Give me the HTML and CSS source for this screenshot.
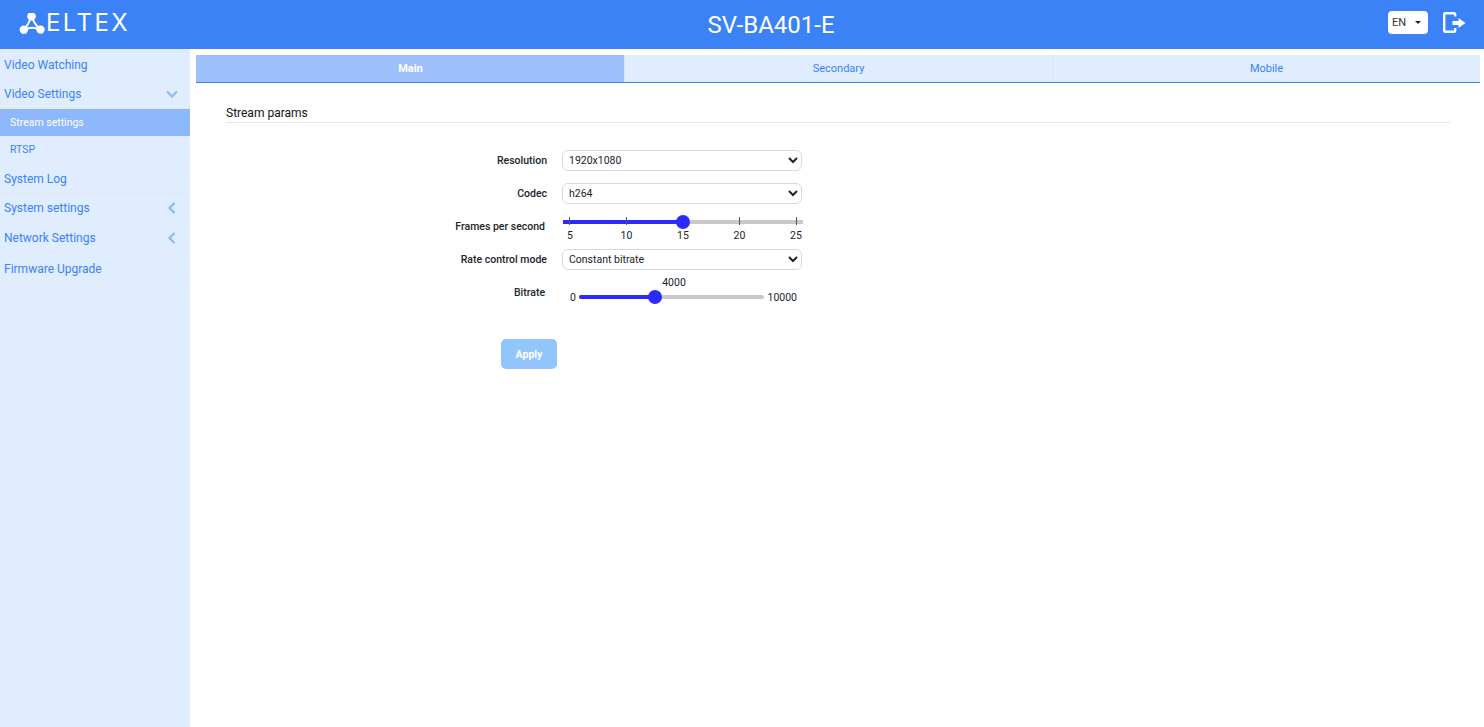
FILE: index.html
```html
<!DOCTYPE html>
<html lang="en">
<head>
    <meta charset="UTF-8">
    <title>SV-BA401-E</title>
    <link rel="stylesheet" href="styles.css">
</head>
<body>
    <header class="topbar">
        <div class="logo">
            <svg class="logo-mark" width="27" height="24" viewBox="0 0 27 24">
                <path d="M13.5 3 Q11 11 6 16.8 Q14 13 22.5 16.5 Q16 11 13.5 3 Z" fill="none" stroke="#fff" stroke-width="2"/>
                <circle cx="13.5" cy="3.2" r="4.3" fill="#fff"/>
                <circle cx="5.8" cy="16.8" r="4.2" fill="#fff"/>
                <circle cx="22.5" cy="16.6" r="4.2" fill="#fff"/>
            </svg>
            <span class="logo-text">ELTEX</span>
        </div>
        <div class="device-name">SV-BA401-E</div>
        <div class="topbar-right">
            <div class="lang">EN <span class="caret"></span></div>
            <svg class="logout" width="23" height="22" viewBox="0 0 23 22">
                <path d="M12.2 4.5 V2.5 Q12.2 1.2 11 1.2 H2.5 Q1.2 1.2 1.2 2.5 V18.5 Q1.2 19.8 2.5 19.8 H11 Q12.2 19.8 12.2 18.5 V16" fill="none" stroke="#fff" stroke-width="2.4"/>
                <path d="M9.5 9 H15.5 V6 L22.5 11 L15.5 16 V13 H9.5 Z" fill="#fff"/>
            </svg>
        </div>
    </header>

    <div class="layout">
        <nav class="sidebar">
            <a class="nav-item plain">Video Watching</a>
            <a class="nav-item">Video Settings
                <svg class="chev" width="12" height="12" viewBox="0 0 12 12"><path d="M1 3.5 L6 8.5 L11 3.5" /></svg>
            </a>
            <a class="nav-sub active">Stream settings</a>
            <a class="nav-sub">RTSP</a>
            <a class="nav-item plain">System Log</a>
            <a class="nav-item">System settings
                <svg class="chev" width="12" height="12" viewBox="0 0 12 12"><path d="M8.5 1 L3.5 6 L8.5 11" /></svg>
            </a>
            <a class="nav-item">Network Settings
                <svg class="chev" width="12" height="12" viewBox="0 0 12 12"><path d="M8.5 1 L3.5 6 L8.5 11" /></svg>
            </a>
            <a class="nav-item plain">Firmware Upgrade</a>
        </nav>

        <main class="content">
            <div class="tabs">
                <div class="tab active">Main</div>
                <div class="tab">Secondary</div>
                <div class="tab">Mobile</div>
            </div>

            <section class="panel">
                <h2 class="panel-title">Stream params</h2>

                <div class="form">
                    <div class="row row-select row-first">
                        <label class="label">Resolution</label>
                        <select class="select"><option>1920x1080</option></select>
                    </div>
                    <div class="row row-select">
                        <label class="label">Codec</label>
                        <select class="select"><option>h264</option></select>
                    </div>
                    <div class="row row-fps">
                        <label class="label label-slider">Frames per second</label>
                        <div class="fps">
                            <div class="track">
                                <div class="track-fill fps-fill"></div>
                                <div class="tick tick-1"></div>
                                <div class="tick tick-2"></div>
                                <div class="tick tick-3"></div>
                                <div class="tick tick-4"></div>
                                <div class="tick tick-5"></div>
                                <div class="thumb fps-thumb"></div>
                            </div>
                            <div class="scale">
                                <span>5</span><span>10</span><span>15</span><span>20</span><span>25</span>
                            </div>
                        </div>
                    </div>
                    <div class="row row-select">
                        <label class="label">Rate control mode</label>
                        <select class="select"><option>Constant bitrate</option></select>
                    </div>
                    <div class="row row-bitrate">
                        <label class="label label-slider">Bitrate</label>
                        <div class="bitrate">
                            <div class="bitrate-value">4000</div>
                            <div class="bitrate-line">
                                <span>0</span>
                                <div class="track bitrate-track">
                                    <div class="track-fill bitrate-fill"></div>
                                    <div class="thumb bitrate-thumb"></div>
                                </div>
                                <span>10000</span>
                            </div>
                        </div>
                    </div>
                    <button class="apply">Apply</button>
                </div>
            </section>
        </main>
    </div>
</body>
</html>
```

FILE: styles.css
```css
* {
    margin: 0;
    padding: 0;
    box-sizing: border-box;
}

html, body {
    height: 100%;
}

body {
    font-family: Roboto, "Liberation Sans", sans-serif;
    font-size: 11px;
    color: #212529;
    background: #fff;
    overflow: hidden;
}

.topbar {
    height: 49px;
    background: #3b82f6;
    color: #fff;
    display: flex;
    align-items: center;
    justify-content: space-between;
    padding: 0 18px 0 18px;
    position: relative;
}

.logo {
    display: flex;
    align-items: center;
    gap: 1px;
}

.logo-text {
    font-family: Inter, sans-serif;
    font-size: 24px;
    font-weight: 400;
    letter-spacing: 2.4px;
    line-height: 1;
    margin-top: -3px;
}

.device-name {
    position: absolute;
    left: 0;
    right: 0;
    text-align: center;
    font-size: 24px;
    padding-left: 58px;
}

.topbar-right {
    display: flex;
    align-items: center;
    gap: 15px;
    position: relative;
    margin-bottom: 4px;
}

.lang {
    width: 40px;
    height: 23px;
    background: #fff;
    border-radius: 4px;
    color: #333;
    font-size: 11px;
    display: flex;
    align-items: center;
    justify-content: space-between;
    padding: 0 7px 0 4px;
}

.caret {
    border-top: 3px solid #222;
    border-left: 3px solid transparent;
    border-right: 3px solid transparent;
}

.layout {
    display: flex;
    height: calc(100% - 49px);
}

.sidebar {
    width: 190px;
    flex-shrink: 0;
    background: #e0edff;
}

.nav-item, .nav-sub {
    display: flex;
    align-items: center;
    justify-content: space-between;
    color: #3b82f6;
    border-bottom: 1px solid #e5e7eb;
}

.nav-item {
    height: 30px;
    padding: 0 12px 0 4px;
    font-size: 12px;
}

.nav-item.plain {
    padding-top: 2px;
}

.nav-sub {
    height: 27px;
    padding-left: 10px;
    font-size: 10.5px;
}

.nav-sub.active {
    background: #8db8fc;
    color: #fff;
    border-bottom: none;
}

.chev {
    fill: none;
    stroke: #8db8fc;
    stroke-width: 2.2;
}

.content {
    flex: 1;
    padding: 6px 4px 0 6px;
}

.tabs {
    display: flex;
    border-bottom: 1px solid #3b82f6;
    height: 28px;
}

.tab {
    flex: 1;
    display: flex;
    align-items: center;
    justify-content: center;
    background: #e0edff;
    color: #3b82f6;
    font-size: 11px;
    border-left: 1px solid #d3e3fb;
}

.tab.active {
    background: #9dc0fb;
    color: #fff;
    font-weight: 700;
    border-left-color: #9dc0fb;
}

.panel {
    padding: 23px 30px 0;
}

.panel-title {
    font-size: 12px;
    font-weight: 400;
    color: #111;
    height: 17px;
    line-height: 15px;
    border-bottom: 1px solid #e5e5e5;
}

.form {
    padding-top: 27px;
    display: flex;
    flex-direction: column;
}

.row {
    display: flex;
    align-items: center;
}

.row-select {
    height: 21px;
    margin-bottom: 11px;
}

.row-first {
    margin-bottom: 12px;
}

.label {
    width: 321px;
    text-align: right;
    font-weight: 500;
    font-size: 10.5px;
    color: #212529;
    margin-right: 15px;
}

.label-slider {
    width: 319px;
    margin-right: 18px;
}

.select {
    width: 240px;
    height: 21px;
    border: 1px solid #d5dae0;
    border-radius: 6px;
    background-color: #fff;
    font-family: inherit;
    font-size: 10.5px;
    color: #212529;
    padding-left: 2px;
}

.row-fps {
    height: 26px;
    margin-bottom: 8px;
    align-items: flex-start;
}

.row-fps .label {
    margin-top: 5px;
}

.fps {
    width: 240px;
}

.track {
    position: relative;
    height: 4px;
    margin-top: 5px;
    background: #c8c8c8;
}

.track-fill {
    position: absolute;
    left: 0;
    top: 0;
    bottom: 0;
    background: #2b2bff;
}

.fps-fill {
    width: 50%;
}

.thumb {
    position: absolute;
    top: -5px;
    width: 14px;
    height: 14px;
    border-radius: 50%;
    background: #2b2bff;
    margin-left: -7px;
}

.fps-thumb {
    left: 50%;
}

.tick {
    position: absolute;
    top: -3px;
    width: 1px;
    height: 8px;
    background: #555;
}

.tick-1 { left: 6px; }
.tick-2 { left: 63px; }
.tick-3 { left: 120px; }
.tick-4 { left: 176px; }
.tick-5 { left: 233px; }

.scale {
    display: flex;
    justify-content: space-between;
    margin-top: 6px;
    font-size: 10.5px;
    line-height: 12px;
    color: #212529;
}

.scale span {
    width: 14px;
    text-align: center;
}

.row-bitrate {
    height: 30px;
    align-items: flex-start;
    margin-top: -6px;
}

.row-bitrate .label {
    margin-top: 11px;
}

.bitrate {
    width: 240px;
    padding: 0 6px 0 7px;
    font-size: 10.5px;
}

.bitrate-value {
    text-align: center;
    padding-right: 19px;
    line-height: 14px;
    margin-top: 1px;
}

.bitrate-line {
    display: flex;
    align-items: center;
    gap: 3px;
    height: 14px;
}

.bitrate-track {
    flex: 1;
    margin-top: 0;
    border-radius: 2px;
}

.bitrate-fill {
    width: 41%;
    border-radius: 2px;
}

.bitrate-thumb {
    left: 41%;
}

.apply {
    width: 56px;
    height: 30px;
    margin: 34px 0 0 275px;
    border: none;
    border-radius: 5px;
    background: #93c5fd;
    color: #fff;
    font-family: inherit;
    font-size: 10.5px;
    font-weight: 700;
}
```
